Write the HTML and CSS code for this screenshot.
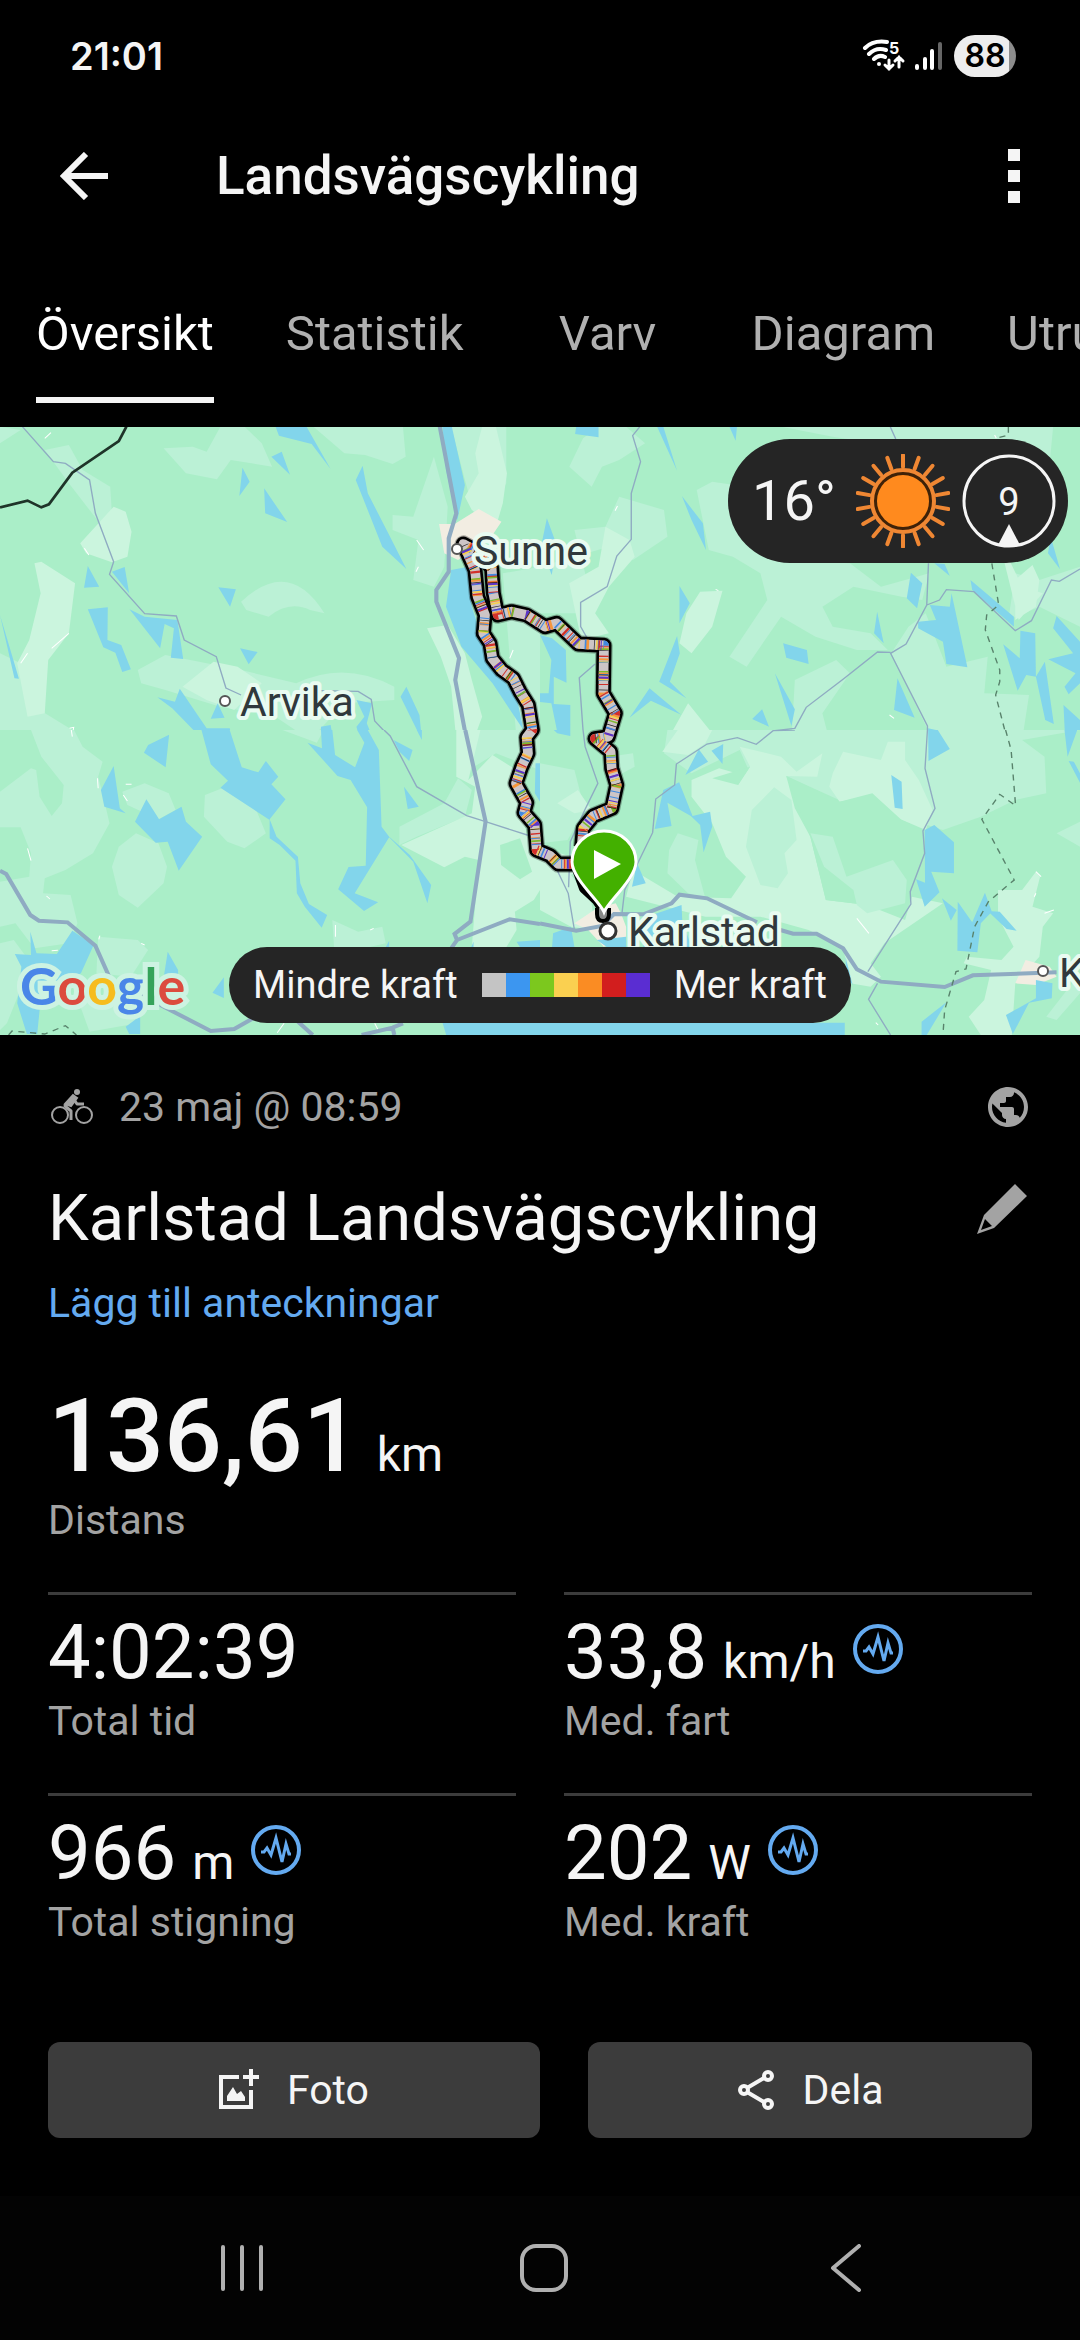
FILE: index.html
```html
<!DOCTYPE html>
<html lang="sv">
<head>
    <meta charset="UTF-8">
    <meta name="viewport" content="width=device-width, initial-scale=1.0">
    <title>Landsvägscykling</title>
    <link rel="stylesheet" href="styles.css">
</head>
<body>
    <div class="status-bar">
        <span class="clock">21:01</span>
        <div class="status-icons">
            <svg width="44" height="34" viewBox="0 0 44 34" fill="none" stroke="#fff" stroke-width="4" stroke-linecap="round">
                <path d="M3 9C10 2 18 2 25 3M7 15c5-5 11-6 17-4M12 20c3-3 7-4 11-2"/>
                <circle cx="17" cy="25" r="2" fill="#fff" stroke="none"/>
                <path stroke-width="3" d="M27 21v9m-4-4 4 4 4-4M37 28V18m-4 4 4-4 4 4"/>
                <text x="27" y="15" class="wifi-band">5</text>
            </svg>
            <svg width="28" height="30" viewBox="0 0 28 30">
                <path stroke="#fff" stroke-width="4" stroke-linecap="round" d="M3 25v2M11 18v9M18 10v17"/>
                <path stroke="#666" stroke-width="4" stroke-linecap="round" d="M26 3v24"/>
            </svg>
            <span class="battery">88</span>
        </div>
    </div>

    <header class="header">
        <button class="icon-button" aria-label="Tillbaka">
            <svg width="48" height="48" viewBox="0 0 48 48" fill="none" stroke="#f5f5f5" stroke-width="6"><path d="M48 24H4M26 2 4 24l22 22"/></svg>
        </button>
        <h1>Landsvägscykling</h1>
        <button class="icon-button" aria-label="Mer">
            <svg width="12" height="54" viewBox="0 0 12 54" fill="#f5f5f5"><path d="M0 0h12v12H0zM0 21h12v12H0zM0 42h12v12H0z"/></svg>
        </button>
    </header>

    <nav class="tabs">
        <a href="#oversikt" class="tab active"><span>Översikt</span></a>
        <a href="#statistik" class="tab"><span>Statistik</span></a>
        <a href="#varv" class="tab"><span>Varv</span></a>
        <a href="#diagram" class="tab"><span>Diagram</span></a>
        <a href="#utrustning" class="tab"><span>Utrustning</span></a>
    </nav>

    <section class="map">
        <svg class="map-canvas" viewBox="0 427 1080 608" preserveAspectRatio="xMidYMid slice">
            <rect y="420" width="1080" height="620" fill="#aaeec8"/>

            <!-- north west -->
            <svg x="0" y="420" width="540" height="320" viewBox="0 0 1568 960" preserveAspectRatio="none">
                <g class="field">
                    <path d="M475 85 560 80 600 95 640 20H710L760 70 790 140 730 130 670 120 630 178 540 160ZM910 20H1170L1178 110 1140 132 1060 105 1000 100ZM130 90 200 75 240 150 320 200 325 280 290 310 200 190ZM700 545Q840 410 942 580L900 570Q840 540 780 590L715 570ZM1260 110 1300 260 1290 440 1260 500 1200 480 1215 360 1140 330V285L1200 290ZM1310 20H1470V190L1390 330 1350 180ZM400 750 480 705 600 730 700 750 860 790Q1000 720 1145 800V840L1000 850 900 960 800 890 640 860 480 810 410 790ZM0 20 60 30 0 70ZM0 700 60 730 100 860 210 930V960H0ZM1460 460 1568 440V960H1500Z"/>
                </g>
                <g class="meadow">
                    <path d="M233 370 330 260 365 275 382 335 370 410 325 427 250 400ZM100 430 120 425 218 490 200 640 140 720 130 880 80 890 50 730 85 660 118 520ZM1400 20H1440L1472 160 1460 250 1440 320 1370 270 1350 230 1390 160 1380 100ZM1240 625 1300 615 1350 700 1370 780 1400 890 1375 960H1325L1310 800 1280 710ZM530 800 620 725 690 740 760 790 680 870 600 840Z"/>
                </g>
                <path class="town" d="M1275 312H1320L1390 267 1456 305 1430 345 1330 420 1290 400Z"/>
                <path class="bright" d="M130 55 148 38M60 730 80 700M150 685 200 640M245 385 258 405M1210 360 1230 390M1490 690 1480 715M202 925 214 922 210 945M1215 440 1208 455"/>
                <g class="water">
                    <path d="M800 20H890L960 147 905 72 810 47ZM788 110 818 95 842 164ZM704 143 725 185 695 228ZM767 205 834 306 770 280ZM1053 137 1068 220 1130 345 1180 447 1110 380 1033 180ZM1285 20H1312L1350 195 1328 300 1295 150ZM255 438 288 500 244 503ZM325 455 362 441 375 520ZM634 502 685 508 668 560ZM255 568 313 562 312 660 352 675 380 748 355 756 335 698 300 682ZM376 568 420 590 515 600 532 717 496 713 505 625 478 612 465 685ZM697 685 748 696 722 733ZM0 585 55 776 42 775ZM457 832 508 845 522 806 600 925H667L677 960H590L500 865ZM632 850 652 893 612 896ZM1180 800 1218 885 1225 960 1163 830ZM932 920 960 915 968 960H932ZM1035 840 1080 850 1065 910 1085 960H1045L1035 920 1058 890ZM465 960 490 945V960ZM1310 450 1360 440 1370 560 1420 720 1500 830 1520 930 1430 790 1340 680 1295 560Z"/>
                </g>
                <g class="road">
                    <path class="thin" d="M65 20 155 125 190 130 260 180 277 280 330 425 318 463 420 581 512 588 535 660 628 710 656 804 700 825M930 812 1040 814 1078 838 1088 903 1140 960"/>
                    <path class="wide" d="M1277 20 1325 280 1303 355V455L1267 510V545L1333 715 1322 780 1355 960"/>
                </g>
                <path class="border-line" d="M0 262 80 242 120 262 142 253 210 158 345 63 367 20"/>
            </svg>

            <!-- north east -->
            <svg x="540" y="420" width="540" height="320" viewBox="0 0 1568 960" preserveAspectRatio="none">
                <g class="field">
                    <path d="M125 55 170 20H250L305 70 230 120 180 140 150 200 85 140ZM455 210 500 185 600 200 700 420 900 430 990 500 1130 460 1110 540 1050 530 910 500 820 560 850 620 960 640 1010 690 920 690 800 650 700 590 600 740 550 710 660 540 640 460 560 410 490 390ZM230 230 360 270 370 350 270 420 200 380 0 440V580H160L100 330 190 320ZM700 20H1490L1480 130 1100 90 850 50ZM1070 620 1120 580 1180 740 1300 710 1290 820 1420 825 1400 960H1140L1020 700ZM740 780 860 720 900 760 820 880 840 960H730ZM1380 460 1450 480 1568 440V620L1450 560 1360 600Z"/>
                </g>
                <g class="meadow">
                    <path d="M190 320 260 360 275 410 200 500 160 580 200 640 120 660 85 490 170 440ZM465 515 530 512 500 620 440 700 405 670 425 580ZM430 850 500 940 490 960H370ZM1380 480 1430 435 1450 480 1440 560 1380 600ZM1330 350 1400 500 1460 520 1390 600Z"/>
                </g>
                <path class="bright" d="M225 258 218 272M510 508 518 512M1015 885 1028 895M1320 45 1325 55"/>
                <g class="water">
                    <path d="M105 20H170V52L102 42ZM340 20H358L398 152ZM550 20H572L568 62ZM412 228 473 310 482 390 440 300ZM20 295 45 365 5 370ZM25 440H38L34 465ZM405 498 435 550 405 610ZM398 648 406 700 377 785 425 835 346 785ZM706 670 775 690 780 732 715 713ZM979 575 998 670 970 640ZM1077 458 1110 490 1095 565 1065 535ZM1132 555 1190 560 1195 520 1241 742 1180 732 1170 665 1098 625V605L1150 600ZM1250 480 1376 590V620L1255 510ZM1483 350 1510 448 1475 400ZM1395 632 1438 640 1440 770 1466 725 1492 912 1467 900 1440 770 1412 765 1387 812 1345 673 1393 715ZM1500 588 1568 665V790L1535 823 1523 800 1555 760 1476 718 1548 700 1490 625ZM1520 855 1568 900V960H1525ZM682 760 740 868 730 918ZM645 868 665 920 616 897ZM318 805 410 884 322 842 260 893ZM1038 775 1088 893 1028 870ZM1127 925 1150 930 1170 960H1127ZM0 645 35 655 75 690 77 788 40 770V852L88 855V948L50 935 33 850 0 846V820L25 820 33 720ZM1145 430 1175 432 1190 468Z"/>
                </g>
                <g class="road">
                    <path class="thin" d="M290 20 269 47 292 125 265 220V358L223 408 195 500 118 547V620L140 660M160 732 114 773 127 960M1017 20 1033 57M1128 430 1123 555 1063 672 1018 700 1125 918V960M1123 555 1160 540 1180 509 1260 515 1380 632 1427 602 1485 480 1508 484 1568 447M1018 697 980 696 880 778 773 862 740 925 675 933 645 960M530 960 568 955 600 960"/>
                </g>
                <path class="county" d="M1312 430 1332 555 1297 585 1293 630 1335 750V785L1323 825 1357 960M1360 20V45L1325 55"/>
            </svg>

            <!-- south west -->
            <svg x="0" y="730" width="540" height="310" viewBox="0 0 1568 930" preserveAspectRatio="none">
                <rect width="1568" height="930" fill="#aaeec8"/>
                <g class="field">
                    <path d="M0 185 90 115 105 120 115 200 150 258 180 220 185 165 120 80 90 0H215L240 50 298 95 285 140 300 200 318 280 270 370 190 420 130 445 125 490 205 495 225 580 200 640 100 655 45 580 0 590V455L85 440 90 370 60 292H0ZM355 185 420 160 490 190 510 240 460 268 370 225ZM595 195 645 175 740 230 772 310 710 355 660 335 592 260ZM395 310 460 340 485 410 475 460 400 533 345 495 325 410 345 350ZM820 0H940L920 38ZM965 570 1040 605 1110 590 1120 640 1070 652H970ZM285 620 400 630 430 660 380 740 280 730ZM1160 290 1290 220 1330 145 1370 180 1350 260 1210 320 1160 345ZM230 820 330 800 420 830 400 880 260 905ZM0 640 40 630 90 700 20 880 0 900ZM1330 0H1568V120L1440 70 1330 140Z"/>
                </g>
                <g class="meadow">
                    <path d="M1325 0H1395L1360 150 1430 75 1500 120 1530 320 1568 380V480L1550 510 1495 545 1500 600 1470 652H1370L1390 390 1350 380 1290 412 1165 345 1370 250 1380 170 1325 140Z"/>
                </g>
                <path class="forest" d="M1452 345 1510 325 1545 425 1510 448 1455 405Z"/>
                <path class="bright" d="M207 0 210 20M283 145 285 175M365 163 382 163M358 195 370 213M80 355 90 392M135 498 145 507M290 617 287 628M974 585V620M1075 600 1085 595M150 662 168 661M825 880 805 908M1088 880 1098 900M410 640 420 645"/>
                <g class="water">
                    <path d="M585 0H667L702 112 750 127 772 93 808 140 788 163 829 208 783 268 803 320 865 380 872 460 897 522 950 555 934 593 885 530 862 490 858 392 812 345 783 325V270L640 173 662 152 612 103ZM491 14 481 112 418 68 430 45ZM330 108 348 235 365 250 303 230 293 180ZM425 208 462 268 527 230 540 275 587 320 519 422 487 335 452 338 392 275ZM932 0H965L973 75 1031 112 1058 38 1037 0H1068L1100 60 1108 290 1130 320 1190 375 1252 465 1241 520 1200 395 1130 322 1030 490 1098 517 1057 543 982 478 1012 411 1062 407 1066 232 1018 150 980 138 893 38 935 55ZM1143 30 1198 60 1188 93 1160 65ZM1210 0H1225V30ZM1173 170 1216 230 1184 237ZM88 605 106 670 165 672 210 602 272 645 235 730 120 790 108 912H78L50 820 62 710 43 672 90 675ZM487 665 517 720 518 835 465 810ZM650 742V804L617 788ZM365 890 407 858V912H375ZM1130 632V652H1120ZM1375 635V652H1368ZM1500 635 1568 630V652H1510ZM1285 878H1568V930H1300ZM1555 100H1568V215L1553 190Z"/>
                </g>
                <g class="road">
                    <path class="thin" d="M1115 0 1133 18 1210 170 1355 257 1410 275 1540 318"/>
                    <path class="wide" d="M0 422 18 432 88 555 113 572 196 577 277 647 330 770 400 790 612 903 680 897 760 850M1351 0 1410 275 1366 575 1320 612 1327 630 1300 670M1327 630 1480 568 1568 582M860 870 908 915M1050 915 1140 893 1170 880M1140 893 1145 915"/>
                </g>
                <path class="county" d="M25 915 35 903 130 912 190 887 222 915"/>
            </svg>

            <!-- south east -->
            <svg x="540" y="730" width="540" height="310" viewBox="0 0 1568 930" preserveAspectRatio="none">
                <rect width="1568" height="930" fill="#aaeec8"/>
                <g class="field">
                    <path d="M370 0H1568L1400 30 1465 80 1470 190 1380 210 1280 260 1170 300 1050 260 960 190 880 215 720 140 610 130 580 60 440 130 360 70ZM1500 310 1568 275V350ZM0 100 100 120 130 240 80 330 0 340ZM200 80 270 70 275 110 220 140ZM1470 860 1568 730V790L1500 870Z"/>
                </g>
                <g class="meadow">
                    <path d="M440 150 520 115 570 130 575 165 610 110 580 50 700 80 745 125 820 70 805 140 715 138 740 235 785 320 830 510 950 525 1060 570 1080 500 1170 520 1000 640 960 700 990 740 960 770 900 760 880 650 780 600 640 560 480 560 250 500 270 420 400 500 555 505 598 440 540 380 500 280 440 200ZM355 65 400 0H500L480 40 430 75ZM850 130 880 65 990 90 1010 35 1060 35 1060 90 1100 150 1140 240 1120 300 1040 265 960 195 870 215 840 170ZM1330 480 1400 480 1440 425 1452 440 1430 530 1490 550 1460 590 1450 680 1380 760 1370 915H1280L1245 860 1290 810 1310 720 1230 700 1240 680 1340 690 1375 650 1330 560ZM0 450 80 420 150 520 160 600 90 590 0 540ZM110 180 50 220 100 250 150 240Z"/>
                    <path d="M0 350 90 380 100 430 40 460 0 470Z"/>
                </g>
                <g class="forest">
                    <path d="M715 138 870 215 965 190 1050 270 1110 300 1115 370 1075 490 950 525 830 510 785 320ZM500 145 610 110 575 165Z"/>
                </g>
                <g class="field">
                    <path d="M615 240 680 172 730 210 745 330 710 370 720 430 690 475 640 465 598 350ZM375 360 400 310 460 330 450 390 480 505 430 490 370 430ZM785 310 850 320 890 440 1025 390 1065 450 1060 520 950 550 920 525 910 480 825 410Z"/>
                </g>
                <g class="town">
                    <path d="M100 580 165 535 220 520 235 550 250 590V630L185 650 140 600ZM1380 760 1410 690 1480 710 1500 740 1440 765Z"/>
                </g>
                <path class="bright" d="M1440 425 1455 440M1440 490 1435 500M1465 550 1492 540M920 565 955 610M975 878 982 885"/>
                <g class="water">
                    <path d="M40 0H88V18L50 10ZM461 58 488 95 422 135ZM532 42 530 102 498 62ZM404 157 443 258 494 245 500 290 475 367 465 285 438 258 370 218 382 288 333 297 358 180ZM1127 0H1155L1190 57 1128 93ZM1020 135 1050 155 1053 237 1030 233ZM1145 285 1202 337V430L1136 425 1160 487 1117 530 1092 448 1118 458 1117 300ZM1167 505 1210 540 1193 572ZM1213 515 1255 577 1292 488 1312 545 1280 580 1270 667 1212 662ZM1300 543 1335 545 1384 602 1355 597ZM1523 0H1560L1532 80ZM1535 93 1550 95 1568 130V158ZM1440 750 1488 760 1486 805 1420 818 1373 912 1353 855 1440 805ZM1180 817 1123 915H1108V875ZM282 400 307 460 267 470ZM38 610 90 590 100 652H35ZM165 630 250 620V652H195ZM310 560 411 525 413 570 440 652H300ZM0 878H885V915H0ZM887 680 908 765 890 740Z"/>
                </g>
                <g class="road">
                    <path class="thin" d="M125 0 131 50 168 160 130 240 88 335 83 472M40 400 82 490 100 600M238 550 246 480 327 308 336 207 391 165 396 102 485 42 573 23 628 43 677 2 740 0M1125 0 1118 115 1147 235 1112 303 1117 370 1075 485 1077 522 952 725M980 760 954 808 1018 915"/>
                    <path class="wide" d="M0 580 105 602 180 588 215 552 300 553 382 520 405 494 485 505 630 577M698 600 735 611H803L880 655 920 718 990 755 1175 771 1257 736 1500 727"/>
                </g>
                <path class="county" d="M1352 0 1368 60 1381 227 1335 193 1283 268 1377 450 1302 515 1262 590 1237 717 1208 725 1175 840 1170 915"/>
            </svg>

            <!-- power coloured track -->
            <svg x="430" y="500" width="220" height="450" viewBox="0 0 660 1350" overflow="visible">
                <defs>
                    <path id="track" d="M455 1040 460 985 490 948 545 925 560 855 545 805 542 755 495 716 535 710 556 640 520 580 522 436 445 432 380 370 345 380 290 345 245 335 203 345 190 280 185 205 150 160 100 132 135 210 143 290 165 345 160 400 180 430 187 475 215 510 250 535 270 575 295 615 307 690 290 712 294 760 275 800 258 850 290 908 282 938 314 975 320 1050 360 1067 385 1092 432 1092"/>
                </defs>
                <use href="#track" class="track-shadow"/>
                <use href="#track" class="track-edge"/>
                <path class="track-tail" d="M442 1110 462 1165 500 1200 520 1230"/>
                <use href="#track" class="track-fill"/>
                <use href="#track" class="track-dash dash-orange"/>
                <use href="#track" class="track-dash dash-red"/>
                <use href="#track" class="track-dash dash-blue"/>
                <use href="#track" class="track-dash dash-yellow"/>
                <use href="#track" class="track-dash dash-green"/>
                <use href="#track" class="track-dash dash-purple"/>
                <use href="#track" class="track-dash dash-black"/>
            </svg>
            <path d="M597 908v6q0 7 6 7t6-7v-6" fill="#888" stroke="#000" stroke-width="4"/>

            <g class="places">
                <text x="474" y="565">Sunne</text>
                <text x="240" y="716">Arvika</text>
                <text x="628" y="946">Karlstad</text>
                <text x="1059" y="987">Kristinehamn</text>
            </g>
            <g fill="#fff" stroke="#555" stroke-width="2">
                <circle cx="457" cy="549" r="5"/>
                <circle cx="225" cy="701" r="5"/>
                <circle cx="608" cy="931" r="8" stroke="#333" stroke-width="3"/>
                <circle cx="1043" cy="971" r="5"/>
            </g>
            <path d="M604 912C600 902 572 878 572 862a32 31 0 0 1 64 0C636 878 608 902 604 912Z" fill="#43b000" stroke="#fff" stroke-width="3"/>
            <path d="M594 850v29l27-15z" fill="#fff"/>
        </svg>

        <div class="weather">
            <span class="temperature">16°</span>
            <svg width="94" height="94" viewBox="-47 -47 94 94">
                <defs><path id="ray" d="M0-34V-46"/></defs>
                <circle r="31" fill="#3f2208" stroke="#ef8733" stroke-width="4"/>
                <circle r="26" fill="#ff8a1e"/>
                <g stroke="#ef8733" stroke-width="4" stroke-linecap="round">
                    <use href="#ray"/><use href="#ray" transform="rotate(20)"/><use href="#ray" transform="rotate(40)"/>
                    <use href="#ray" transform="rotate(60)"/><use href="#ray" transform="rotate(80)"/><use href="#ray" transform="rotate(100)"/>
                    <use href="#ray" transform="rotate(120)"/><use href="#ray" transform="rotate(140)"/><use href="#ray" transform="rotate(160)"/>
                    <use href="#ray" transform="rotate(180)"/><use href="#ray" transform="rotate(200)"/><use href="#ray" transform="rotate(220)"/>
                    <use href="#ray" transform="rotate(240)"/><use href="#ray" transform="rotate(260)"/><use href="#ray" transform="rotate(280)"/>
                    <use href="#ray" transform="rotate(300)"/><use href="#ray" transform="rotate(320)"/><use href="#ray" transform="rotate(340)"/>
                </g>
            </svg>
            <svg width="94" height="94" viewBox="0 0 94 94">
                <circle cx="47" cy="47" r="45" fill="none" stroke="#f5f5f5" stroke-width="3"/>
                <path d="M47 70 36 91q11 4 22 0z" fill="#f5f5f5"/>
                <text x="47" y="61" text-anchor="middle" class="wind">9</text>
            </svg>
        </div>

        <div class="google"><span class="g-blue">G</span><span class="g-red">o</span><span class="g-yellow">o</span><span class="g-blue">g</span><span class="g-green">l</span><span class="g-red">e</span></div>

        <div class="legend">
            <span>Mindre kraft</span>
            <div class="scale">
                <i class="zone-1"></i><i class="zone-2"></i><i class="zone-3"></i><i class="zone-4"></i><i class="zone-5"></i><i class="zone-6"></i><i class="zone-7"></i>
            </div>
            <span>Mer kraft</span>
        </div>
    </section>

    <main class="details">
        <div class="meta">
            <svg width="42" height="38" viewBox="0 0 42 38" fill="none" stroke="#a3a3a3" stroke-width="2">
                <circle cx="9" cy="27" r="8"/><circle cx="33" cy="27" r="8"/>
                <circle cx="26" cy="4" r="3" fill="#a3a3a3" stroke="none"/>
                <path stroke-width="3" stroke-linejoin="round" d="M20 32v-9l-6-5 8-8 4 6h7"/>
                <path fill="#a3a3a3" d="M14 16 22 7l4 3-6 8z"/>
            </svg>
            <span>23 maj @ 08:59</span>
            <svg class="globe" width="48" height="48" viewBox="0 0 24 24" fill="#a3a3a3">
                <path d="M12 2C6.480 2 2 6.480 2 12s4.480 10 10 10 10-4.480 10-10S17.520 2 12 2zm-1 17.930c-3.950-.49-7-3.850-7-7.930 0-.62.080-1.210.210-1.790L9 15v1c0 1.100.9 2 2 2v1.930zm6.900-2.540c-.26-.81-1-1.390-1.900-1.390h-1v-3c0-.55-.45-1-1-1H8v-2h2c.55 0 1-.45 1-1V7h2c1.100 0 2-.9 2-2v-.41c2.930 1.190 5 4.060 5 7.410 0 2.080-.8 3.970-2.100 5.390z"/>
            </svg>
        </div>
        <div class="title-row">
            <h2>Karlstad Landsvägscykling</h2>
            <button class="icon-button" aria-label="Redigera">
                <svg width="52" height="52" viewBox="0 0 52 52" fill="#a3a3a3"><path fill-rule="evenodd" d="M39 1 51 13 18 45 1 51 8 32zM9 36 5 47 16 43z"/></svg>
            </button>
        </div>
        <a href="#anteckningar" class="notes-link">Lägg till anteckningar</a>

        <div class="distance">
            <p class="value"><strong>136,61</strong> <span class="unit">km</span></p>
            <p class="label">Distans</p>
        </div>

        <div class="stats">
            <div class="stat">
                <p class="value">4:02:39</p>
                <p class="label">Total tid</p>
            </div>
            <div class="stat">
                <p class="value">33,8 <span class="unit">km/h</span>
                    <button class="icon-button" aria-label="Visa diagram för fart">
                        <svg width="52" height="52" viewBox="0 0 52 52" fill="none" stroke="#64aaf0" stroke-width="4"><circle cx="26" cy="26" r="23"/><path stroke-width="3" d="M11 28h3l3-4 4 7 5-17 6 24 4-18 3 10h2"/></svg>
                    </button>
                </p>
                <p class="label">Med. fart</p>
            </div>
            <div class="stat">
                <p class="value">966 <span class="unit">m</span>
                    <button class="icon-button" aria-label="Visa diagram för stigning">
                        <svg width="52" height="52" viewBox="0 0 52 52" fill="none" stroke="#64aaf0" stroke-width="4"><circle cx="26" cy="26" r="23"/><path stroke-width="3" d="M11 28h3l3-4 4 7 5-17 6 24 4-18 3 10h2"/></svg>
                    </button>
                </p>
                <p class="label">Total stigning</p>
            </div>
            <div class="stat">
                <p class="value">202 <span class="unit">W</span>
                    <button class="icon-button" aria-label="Visa diagram för kraft">
                        <svg width="52" height="52" viewBox="0 0 52 52" fill="none" stroke="#64aaf0" stroke-width="4"><circle cx="26" cy="26" r="23"/><path stroke-width="3" d="M11 28h3l3-4 4 7 5-17 6 24 4-18 3 10h2"/></svg>
                    </button>
                </p>
                <p class="label">Med. kraft</p>
            </div>
        </div>

        <div class="actions">
            <button class="action">
                <svg width="40" height="42" viewBox="0 0 40 42" fill="none" stroke="#f5f5f5" stroke-width="4">
                    <path d="M20 8H2v30h30V21M32 0v17M24 8h16"/>
                    <path d="M8 32V27l6-9 4 7 4-3 4 6v4z" fill="#f5f5f5" stroke="none"/>
                </svg>
                Foto
            </button>
            <button class="action">
                <svg width="38" height="42" viewBox="0 0 38 42" fill="none" stroke="#f5f5f5" stroke-width="4">
                    <circle cx="7" cy="21" r="4"/><circle cx="31" cy="7" r="4"/><circle cx="31" cy="35" r="4"/>
                    <path d="M10 19 27 9M10 23l17 10"/>
                </svg>
                Dela
            </button>
        </div>
    </main>

    <div class="nav-bar">
        <button class="icon-button" aria-label="Senaste">
            <svg width="48" height="48" viewBox="0 0 48 48" stroke="#b0b0b0" stroke-width="4" stroke-linecap="round"><path d="M5 3v42M24 3v42M43 3v42"/></svg>
        </button>
        <button class="icon-button" aria-label="Hem">
            <svg width="48" height="48" viewBox="0 0 48 48" fill="none" stroke="#b0b0b0" stroke-width="4"><rect x="2" y="2" width="44" height="44" rx="14"/></svg>
        </button>
        <button class="icon-button" aria-label="Bakåt">
            <svg width="48" height="48" viewBox="0 0 48 48" fill="none" stroke="#b0b0b0" stroke-width="4" stroke-linecap="round" stroke-linejoin="round"><path d="M37 2 11 24l26 22"/></svg>
        </button>
    </div>
</body>
</html>
```
FILE: styles.css
```css
* {
    box-sizing: border-box;
}
body {
    font-family: Roboto, Arial, sans-serif;
    background-color: #000;
    color: #f5f5f5;
    margin: 0;
    min-height: 100vh;
    display: flex;
    flex-direction: column;
    overflow-x: hidden;
}
h1, h2, p {
    margin: 0;
    font-weight: 400;
}
svg {
    display: block;
    flex: none;
}
.icon-button {
    background: none;
    border: none;
    padding: 0;
    cursor: pointer;
}

/* status bar */
.status-bar {
    height: 112px;
    padding: 0 64px 0 70px;
    display: flex;
    align-items: center;
    justify-content: space-between;
    font-family: Inter, sans-serif;
    font-weight: 600;
}
.clock {
    font-size: 38px;
}
.status-icons {
    display: flex;
    align-items: center;
    gap: 8px;
}
.wifi-band {
    font-size: 16px;
    font-weight: 700;
    fill: #fff;
    stroke: none;
}
.battery {
    width: 62px;
    line-height: 42px;
    margin-left: 4px;
    border-radius: 21px;
    background: linear-gradient(90deg, #ededed 88%, #8c8c8c 88%);
    color: #000;
    font-size: 32px;
    text-align: center;
}

/* header */
.header {
    height: 128px;
    padding: 0 60px;
    display: flex;
    align-items: center;
}
.header h1 {
    flex: 1;
    margin-left: 108px;
    font-size: 53px;
    font-weight: 500;
}
.tabs {
    display: flex;
    margin-bottom: 24px;
    padding-top: 66px;
    overflow: hidden;
}
.tab {
    flex: none;
    min-width: 216px;
    padding: 0 36px;
    text-align: center;
    text-decoration: none;
    color: #b0b0b0;
    font-size: 49px;
    line-height: 56px;
}
.tab span {
    display: inline-block;
    padding-bottom: 35px;
    border-bottom: 6px solid transparent;
    vertical-align: top;
}
.tab.active {
    color: #fff;
}
.tab.active span {
    border-color: #f5f5f5;
}

/* map */
.map {
    position: relative;
}
.map-canvas {
    width: 100%;
    height: auto;
}
.field {
    fill: #bbf1d6;
}
.meadow {
    fill: #cbf5de;
}
.forest {
    fill: #aaeec8;
}
.town {
    fill: #f2ede2;
}
.water {
    fill: #82d5eb;
}
.bright {
    fill: none;
    stroke: #fff;
    stroke-width: 3;
}
.road {
    fill: none;
    stroke: #8fabc2;
}
.thin {
    stroke-width: 4;
}
.wide {
    stroke-width: 12;
}
.border-line {
    fill: none;
    stroke: #1f3429;
    stroke-width: 8;
}
.county {
    fill: none;
    stroke: #58826b;
    stroke-width: 4;
    stroke-dasharray: 18 16;
}
.track-shadow, .track-edge, .track-fill, .track-dash, .track-tail {
    fill: none;
    stroke: #000;
    stroke-linejoin: round;
}
.track-shadow {
    stroke-width: 52;
    opacity: 0.3;
}
.track-edge {
    stroke-width: 45;
}
.track-tail {
    stroke-width: 30;
}
.track-fill {
    stroke: #cdc5c6;
    stroke-width: 29;
}
.track-dash {
    stroke-width: 29;
}
.dash-orange {
    stroke: #f5953c;
    stroke-dasharray: 6 29 4 51 9 37;
}
.dash-red {
    stroke: #d2302a;
    stroke-dasharray: 4 27 3 13 7 61;
}
.dash-blue {
    stroke: #4189e0;
    stroke-dasharray: 3 33 5 47 3 15;
}
.dash-yellow {
    stroke: #f6d04e;
    stroke-dasharray: 5 49 3 67;
}
.dash-green {
    stroke: #7db92c;
    stroke-dasharray: 4 63 5 89;
}
.dash-purple {
    stroke: #5c34c8;
    stroke-dasharray: 3 73 6 101;
}
.dash-black {
    stroke: #222;
    stroke-dasharray: 2 43 2 71;
}
.places {
    font-size: 41px;
    fill: #30383c;
    stroke: #e9fbf1;
    stroke-width: 8;
    stroke-linejoin: round;
    paint-order: stroke;
}
.weather {
    position: absolute;
    top: 12px;
    right: 12px;
    height: 124px;
    padding: 0 12px 0 24px;
    display: flex;
    align-items: center;
    gap: 12px;
    border-radius: 62px;
    background-color: #252525;
}
.temperature {
    width: 92px;
    font-size: 56px;
}
.wind {
    font-size: 38px;
    fill: #f5f5f5;
}
.google {
    position: absolute;
    left: 20px;
    bottom: 18px;
    font-family: Lato, sans-serif;
    font-size: 52px;
    font-weight: 700;
    line-height: 64px;
    -webkit-text-stroke: 10px #cdf3e2;
    paint-order: stroke;
}
.g-blue {
    color: #4a86e8;
}
.g-red {
    color: #dc4b3e;
}
.g-yellow {
    color: #f6bc1e;
}
.g-green {
    color: #35a35a;
}
.legend {
    position: absolute;
    left: 50%;
    bottom: 12px;
    transform: translateX(-50%);
    height: 76px;
    padding: 0 24px;
    display: flex;
    align-items: center;
    gap: 24px;
    border-radius: 38px;
    background-color: #252525;
    font-size: 38px;
    white-space: nowrap;
}
.scale {
    display: flex;
}
.scale i {
    width: 24px;
    height: 24px;
}
.zone-1 {
    background-color: #c4c4c4;
}
.zone-2 {
    background-color: #3c96f0;
}
.zone-3 {
    background-color: #7cc81e;
}
.zone-4 {
    background-color: #fad050;
}
.zone-5 {
    background-color: #fa8c23;
}
.zone-6 {
    background-color: #d21e1e;
}
.zone-7 {
    background-color: #5a2dd2;
}

/* activity details */
.details {
    padding: 48px;
}
.meta {
    display: flex;
    align-items: center;
    gap: 26px;
    color: #a3a3a3;
    font-size: 41px;
    line-height: 48px;
    padding-left: 3px;
}
.globe {
    margin-left: auto;
}
.title-row {
    display: flex;
    justify-content: space-between;
    margin-top: 49px;
    padding-right: 4px;
}
.title-row h2 {
    font-size: 65px;
    line-height: 76px;
}
.title-row .icon-button {
    align-self: flex-start;
    padding-top: 3px;
}
.notes-link {
    display: block;
    margin-top: 23px;
    color: #64aaf0;
    font-size: 41px;
    line-height: 48px;
    text-decoration: none;
}
.value {
    display: flex;
    align-items: baseline;
    gap: 16px;
    font-size: 76px;
    line-height: 90px;
}
.value .icon-button {
    align-self: center;
    padding-bottom: 6px;
}
.unit {
    font-size: 48px;
    line-height: 1;
}
.label {
    color: #a3a3a3;
    font-size: 41px;
    line-height: 48px;
}
.distance {
    margin: 49px 0 48px;
}
.distance .value {
    font-size: 102px;
    line-height: 120px;
}
.distance strong {
    font-weight: 500;
}
.stats {
    display: grid;
    grid-template-columns: 1fr 1fr;
    column-gap: 48px;
}
.stat {
    border-top: 3px solid #3c3c3c;
    padding: 12px 0 48px;
}
.actions {
    display: grid;
    grid-template-columns: 41fr 37fr;
    gap: 48px;
    margin-top: 48px;
}
.action {
    height: 96px;
    display: flex;
    align-items: center;
    justify-content: center;
    gap: 28px;
    border: none;
    border-radius: 12px;
    background-color: #3c3c3c;
    color: #f5f5f5;
    font-family: inherit;
    font-size: 41px;
    cursor: pointer;
}

/* system navigation */
.nav-bar {
    height: 144px;
    margin-top: auto;
    padding: 0 210px 0 218px;
    display: flex;
    align-items: center;
    justify-content: space-between;
    background-color: #030303;
}
```
